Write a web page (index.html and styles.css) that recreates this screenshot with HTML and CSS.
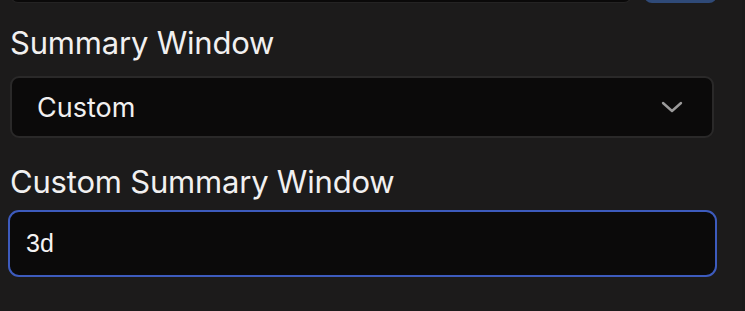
FILE: index.html
```html
<!DOCTYPE html>
<html>
<head>
<meta charset="utf-8">
<link rel="stylesheet" href="styles.css">
</head>
<body>
<div class="page">
  <div class="main">
    <div class="toprow">
      <div class="topfield"></div>
      <div class="topbtn"></div>
    </div>
    <div class="label label-first">Summary Window</div>
    <div class="select">
      <span class="select-value">Custom</span>
      <svg class="chevron" width="22" height="12" viewBox="0 0 22 12"><path d="M2 2 L11 10 L20 2" fill="none" stroke="#9b9a9a" stroke-width="2.4" stroke-linecap="round" stroke-linejoin="round"/></svg>
    </div>
    <div class="label label-second">Custom Summary Window</div>
    <div class="input">3d</div>
  </div>
  <div class="gutter"></div>
</div>
</body>
</html>
```

FILE: styles.css
```css
html, body {
  margin: 0;
  padding: 0;
  background: #1c1b1b;
  height: 100%;
  overflow: hidden;
}
.page {
  display: flex;
  height: 311px;
}
.main {
  flex: 1;
  display: flex;
  flex-direction: column;
  padding-left: 10px;
  padding-right: 25px;
}
.gutter {
  width: 6px;
  background: #1a1919;
}
.toprow {
  display: flex;
  gap: 12px;
  height: 20px;
  margin-top: -17px;
}
.topfield {
  width: 620px;
  background: #0a0909;
  border-radius: 0 0 8px 8px;
  border: 1px solid #242323;
  border-top: none;
}
.topbtn {
  width: 73px;
  background: #2f4a78;
  border-radius: 0 0 8px 8px;
}
.label {
  font-family: Inter, "Noto Sans", sans-serif;
  font-size: 31px;
  line-height: 38px;
  color: #f1f0f0;
  letter-spacing: -0.2px;
}
.label-first {
  margin-top: 21px;
  margin-bottom: 14px;
}
.label-second {
  margin-top: 25px;
  margin-bottom: 9px;
}
.select {
  width: 704px;
  height: 62px;
  box-sizing: border-box;
  border: 2px solid #2a2929;
  border-radius: 9px;
  background: #0b0a0a;
  display: flex;
  align-items: center;
  justify-content: space-between;
  padding: 0 29px 0 25px;
}
.select-value {
  font-family: Inter, "Noto Sans", sans-serif;
  font-size: 27px;
  color: #f1f0f0;
}
.chevron {
  display: block;
}
.input {
  width: 709px;
  height: 67px;
  box-sizing: border-box;
  margin-left: -2px;
  border: 2.5px solid #3d5bbd;
  border-radius: 11px;
  background: #0b0a0a;
  display: flex;
  align-items: center;
  padding-left: 16px;
  font-family: "Liberation Sans", Arial, sans-serif;
  font-size: 25px;
  color: #f4f3f3;
}
```
